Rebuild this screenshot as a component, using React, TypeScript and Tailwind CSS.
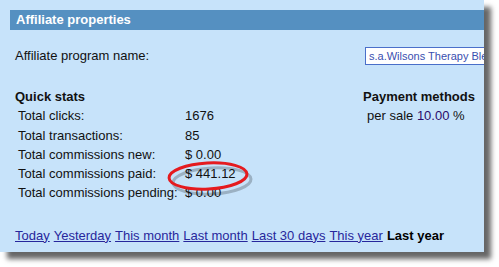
import React from "react";

export default function App() {
  const rows: [string, string][] = [
    ["Total clicks:", "1676"],
    ["Total transactions:", "85"],
    ["Total commissions new:", "$ 0.00"],
    ["Total commissions paid:", "$ 441.12"],
    ["Total commissions pending:", "$ 0.00"],
  ];
  const links = ["Today", "Yesterday", "This month", "Last month", "Last 30 days", "This year"];
  return (
    <div
      className="relative w-[499px] h-[267px] bg-white overflow-hidden text-[13px] text-[#111]"
      style={{ fontFamily: '"Liberation Sans", Arial, sans-serif' }}
    >
      <div className="relative w-[484px] h-[252px] bg-[#c7e3fa] overflow-hidden shadow-[7px_7px_5px_rgba(0,0,0,0.6)] pt-[10px] pl-[10px] flex flex-col">
        <div className="h-[20px] bg-[#5590c1] text-white font-bold leading-[20px] pl-[6px] text-[13px]">
          Affiliate properties
        </div>
        <div className="mt-[17px] h-[18px] flex items-center">
          <div className="w-[355px] shrink-0 pl-[5px] leading-[18px]">Affiliate program name:</div>
          <div className="w-[119px] shrink-0 h-[18px] border border-r-0 border-[#4a6fc9] bg-white text-[#3a4fb0] text-[11px] leading-[16px] pl-[3px] whitespace-nowrap overflow-hidden">
            s.a.Wilsons Therapy Ble
          </div>
        </div>
        <div className="mt-[22px] flex">
          <div className="w-[353px] shrink-0 pl-[5px]">
            <div className="font-bold leading-[19.25px]">Quick stats</div>
            {rows.map(([l, v]) => (
              <div key={l} className="flex leading-[19.25px]">
                <div className="w-[170px] shrink-0 pl-[3px] whitespace-nowrap">{l}</div>
                <div>{v}</div>
              </div>
            ))}
          </div>
          <div>
            <div className="font-bold leading-[19.25px]">Payment methods</div>
            <div className="pl-[4px] leading-[19.25px]">
              per sale <span className="text-[#2a0a6a]">10.00</span> %
            </div>
          </div>
        </div>
        <div className="mt-[24px] pl-[5px] flex gap-[4px] leading-[18px] whitespace-nowrap">
          {links.map((l) => (
            <a key={l} href="#" className="text-[#27279c] underline">
              {l}
            </a>
          ))}
          <span className="font-bold text-black">Last year</span>
        </div>
      </div>
      <svg className="absolute left-[160px] top-[155px]" width="100" height="45" viewBox="0 0 100 45">
        <ellipse cx="50" cy="23" rx="39" ry="13" fill="none" stroke="rgba(0,0,0,0.22)" strokeWidth="3" transform="translate(2 3) rotate(-3 50 22)" />
        <ellipse cx="48" cy="21" rx="39" ry="13" fill="none" stroke="#e51b1f" strokeWidth="3" transform="rotate(-3 48 21)" />
      </svg>
    </div>
  );
}
